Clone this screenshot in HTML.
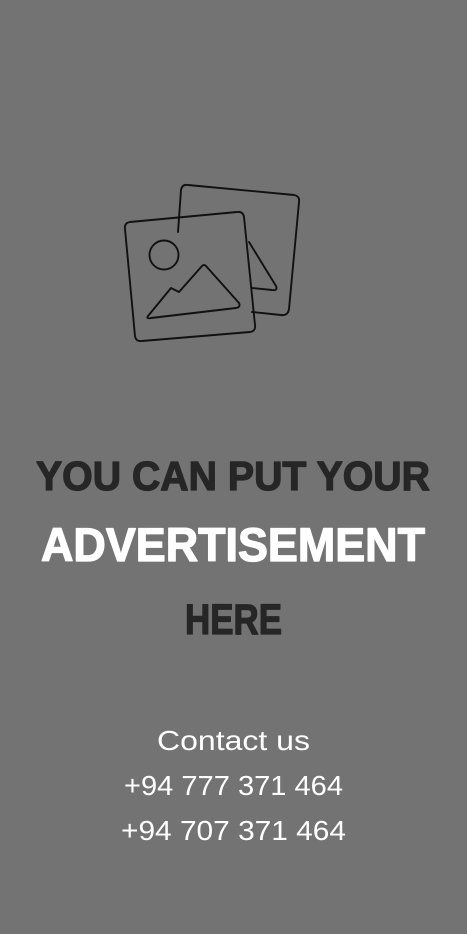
<!DOCTYPE html>
<html><head><style>
html,body{margin:0;padding:0;background:#737373;width:467px;height:934px;overflow:hidden}
</style></head><body>
<svg width="467" height="934" viewBox="0 0 467 934" xmlns="http://www.w3.org/2000/svg">
<rect width="467" height="934" fill="#737373"/>
<g fill="none" stroke="#111" stroke-width="1.9" stroke-linejoin="round" stroke-linecap="round">
<path d="M178 232 L181 190 Q182 184 188 185 L294 195 Q300 196 299 202 L289 309 Q288 316 281 315 L252 312"/>
<path d="M249 242 L276 286 Q278 291 272 290 L252 288"/>
<path d="M125 229 Q124 223 130 222 L237 212 Q243 211 244 217 L255 325 Q256 331 250 332 L142 341 Q136 342 135 336 Z"/>
<circle cx="164" cy="255" r="14.5"/>
<path d="M148 316 L171 288 L179 292 L202 266 Q204 264 206 266 L239 303 Q241 307 236 308 L151 318 Q146 319 148 316 Z"/>
</g>
<g font-family="Liberation Sans, sans-serif" font-weight="bold" text-anchor="start" stroke-width="1.3" stroke-linejoin="round">
<text x="36" y="490" font-size="41" fill="#262626" stroke="#262626" textLength="394" lengthAdjust="spacingAndGlyphs">YOU CAN PUT YOUR</text>
<text x="41" y="561" font-size="47" fill="#ffffff" stroke="#ffffff" textLength="384" lengthAdjust="spacingAndGlyphs">ADVERTISEMENT</text>
<text x="185" y="634" font-size="43" fill="#262626" stroke="#262626" textLength="97" lengthAdjust="spacingAndGlyphs">HERE</text>
</g>
<g font-family="Liberation Sans, sans-serif" fill="#ffffff" font-size="28">
<text x="157" y="750" textLength="153" lengthAdjust="spacingAndGlyphs">Contact us</text>
<text x="124" y="795" textLength="219" lengthAdjust="spacingAndGlyphs">+94 777 371 464</text>
<text x="121" y="840" textLength="225" lengthAdjust="spacingAndGlyphs">+94 707 371 464</text>
</g>
</svg>
</body></html>
